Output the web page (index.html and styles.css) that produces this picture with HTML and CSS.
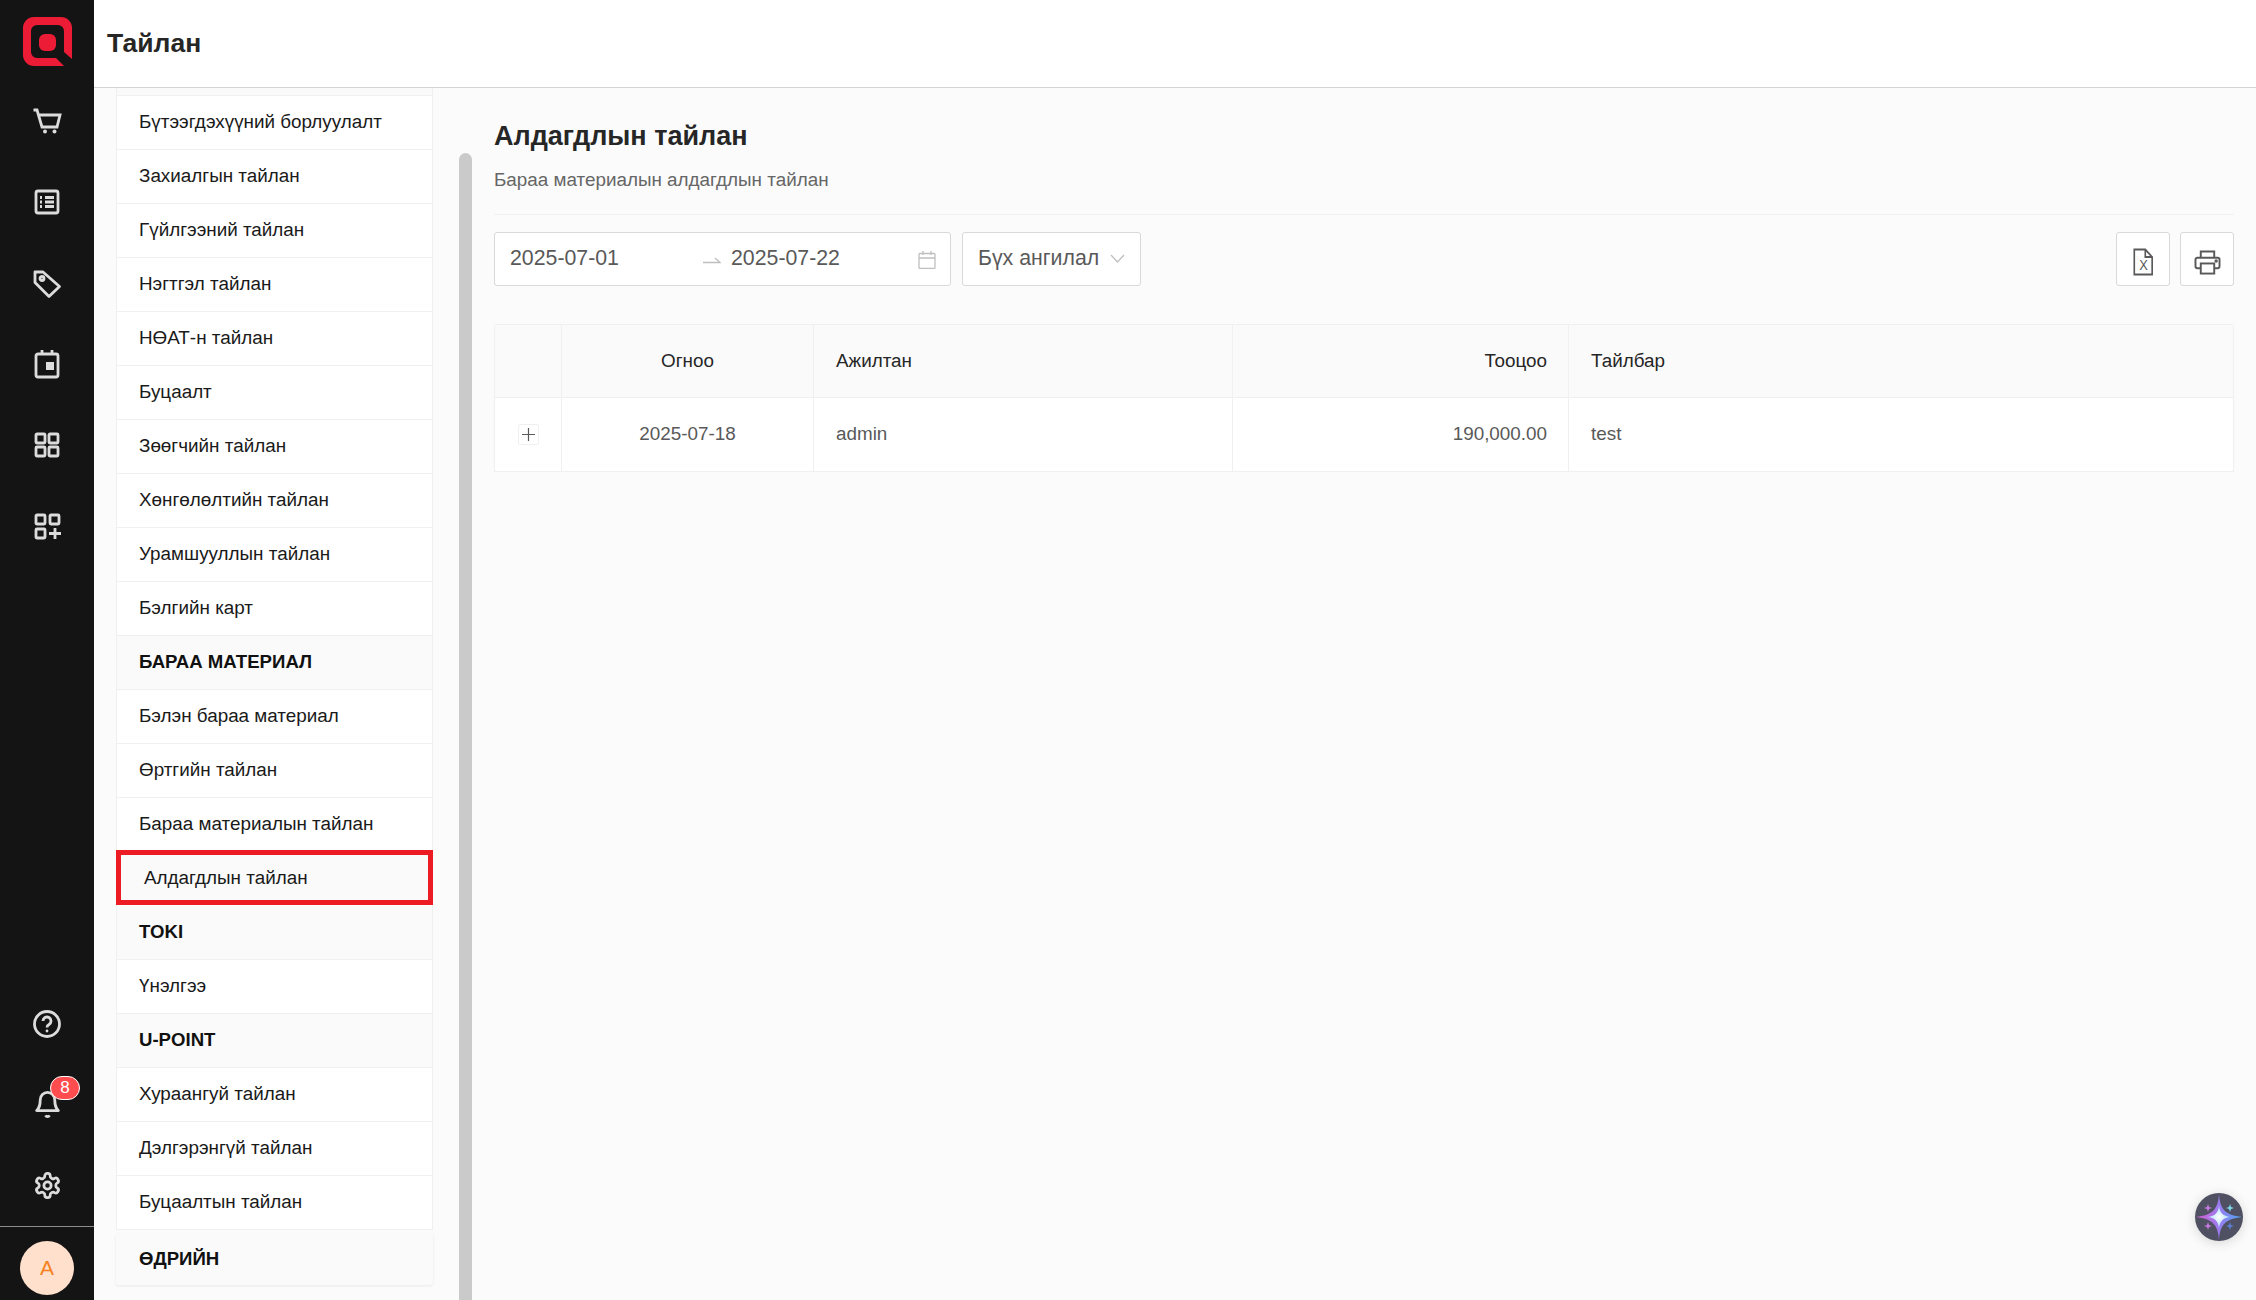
FILE: index.html
```html
<!DOCTYPE html>
<html lang="en">
<head>
  <meta charset="UTF-8">
  <title>Тайлан</title>
  <link rel="stylesheet" href="styles.css">
</head>
<body>
  <div class="app">
    <aside class="rail">
      <div class="logo">
        <svg width="49" height="49" viewBox="0 0 49 49"><path fill="#ed1c36" d="M11 0H38a11 11 0 0 1 11 11V42L41 35V14a6 6 0 0 0-6-6H14a6 6 0 0 0-6 6V35a6 6 0 0 0 6 6H33L41 49H11A11 11 0 0 1 0 38V11A11 11 0 0 1 11 0Z"/><rect fill="#ed1c36" x="16" y="17" width="17" height="17" rx="6"/></svg>
      </div>
      <nav class="rail-nav">
        <a class="rail-item"><svg class="ri" width="28" height="26" viewBox="0 0 28 26"><path d="M.5 2H4L9 19H24L27 7H5.5"/><circle class="dot" cx="12" cy="23.5" r="2"/><circle class="dot" cx="21.5" cy="23.5" r="2"/></svg></a>
        <a class="rail-item"><svg class="ri" width="26" height="26" viewBox="0 0 26 26"><rect x="2" y="2" width="22" height="22" rx="2"/><path d="M11 8.500H20M11 13H20M11 17.500H20M6 8.500H8M6 13H8M6 17.500H8"/></svg></a>
        <a class="rail-item"><svg class="ri" width="30" height="30" viewBox="0 0 30 30"><path d="M3 4H11L27.500 18.500L17 28.500L3 14.500Z" stroke-linejoin="round"/><circle cx="10" cy="10.500" r="2"/></svg></a>
        <a class="rail-item"><svg class="ri" width="26" height="30" viewBox="0 0 26 30"><rect x="2" y="5" width="22" height="23" rx="2"/><path d="M8 1V5M18 1V5"/><rect class="dot" x="12" y="13" width="8" height="8"/></svg></a>
        <a class="rail-item"><svg class="ri" width="26" height="26" viewBox="0 0 26 26"><rect x="2" y="2" width="9" height="9" rx="1"/><rect x="15" y="2" width="9" height="9" rx="1"/><rect x="2" y="15" width="9" height="9" rx="1"/><rect x="15" y="15" width="9" height="9" rx="1"/></svg></a>
        <a class="rail-item rail-plus"><svg class="ri" width="27" height="27" viewBox="0 0 27 27"><rect x="2" y="2" width="9" height="9" rx="1"/><rect x="16" y="2" width="9" height="9" rx="1"/><rect x="2" y="16" width="9" height="9" rx="1"/><path d="M15 20.500H27M21 15V26"/></svg></a>
      </nav>
      <div class="rail-bottom">
        <a class="rail-item"><svg class="ri" width="28" height="28" viewBox="0 0 28 28"><circle cx="14" cy="14" r="12.500"/><path d="M10 11a4 4 0 1 1 6 3.500c-1.500.9-2 1.500-2 3"/><circle class="dot" cx="14" cy="21" r="1.400"/></svg></a>
        <a class="rail-item bell">
          <svg class="ri" width="29" height="29" viewBox="0 0 24 24" stroke-linejoin="round"><path d="M6 8a6 6 0 0 1 12 0c0 7 3 9 3 9H3s3-2 3-9" stroke-width="2.300"/><path d="M10.300 21a1.940 1.940 0 0 0 3.400 0" stroke-width="2.300"/></svg>
          <span class="badge">8</span>
        </a>
        <a class="rail-item"><svg class="ri" width="29" height="29" viewBox="0 0 24 24" stroke-linejoin="round"><path stroke-width="2.300" d="M12.220 2h-.44a2 2 0 0 0-2 2v.18a2 2 0 0 1-1 1.730l-.43.25a2 2 0 0 1-2 0l-.15-.08a2 2 0 0 0-2.730.73l-.22.38a2 2 0 0 0 .73 2.730l.15.1a2 2 0 0 1 1 1.720v.51a2 2 0 0 1-1 1.740l-.15.09a2 2 0 0 0-.73 2.730l.22.38a2 2 0 0 0 2.730.73l.15-.08a2 2 0 0 1 2 0l.43.25a2 2 0 0 1 1 1.730V20a2 2 0 0 0 2 2h.44a2 2 0 0 0 2-2v-.18a2 2 0 0 1 1-1.730l.43-.25a2 2 0 0 1 2 0l.15.08a2 2 0 0 0 2.730-.73l.22-.39a2 2 0 0 0-.73-2.730l-.15-.08a2 2 0 0 1-1-1.740v-.5a2 2 0 0 1 1-1.740l.15-.09a2 2 0 0 0 .73-2.730l-.22-.38a2 2 0 0 0-2.730-.73l-.15.08a2 2 0 0 1-2 0l-.43-.25a2 2 0 0 1-1-1.730V4a2 2 0 0 0-2-2z"/><circle cx="12" cy="12" r="3" stroke-width="2.300"/></svg></a>
        <div class="rail-user"><span class="avatar">A</span></div>
      </div>
    </aside>

    <div class="page">
      <header class="topbar"><h1>Тайлан</h1></header>
      <div class="body">
        <section class="side">
          <div class="menu-wrap">
            <div class="stub"></div>
            <ul class="menu">
              <li>Бүтээгдэхүүний борлуулалт</li>
              <li>Захиалгын тайлан</li>
              <li>Гүйлгээний тайлан</li>
              <li>Нэгтгэл тайлан</li>
              <li>НӨАТ-н тайлан</li>
              <li>Буцаалт</li>
              <li>Зөөгчийн тайлан</li>
              <li>Хөнгөлөлтийн тайлан</li>
              <li>Урамшууллын тайлан</li>
              <li>Бэлгийн карт</li>
              <li class="head">БАРАА МАТЕРИАЛ</li>
              <li>Бэлэн бараа материал</li>
              <li>Өртгийн тайлан</li>
              <li>Бараа материалын тайлан</li>
              <li class="active">Алдагдлын тайлан</li>
              <li class="head">TOKI</li>
              <li>Үнэлгээ</li>
              <li class="head">U-POINT</li>
              <li>Хураангуй тайлан</li>
              <li>Дэлгэрэнгүй тайлан</li>
              <li>Буцаалтын тайлан</li>
            </ul>
            <div class="menu-last">ӨДРИЙН</div>
          </div>
          <div class="scroll"><div class="thumb"></div></div>
        </section>

        <main class="main">
          <h2>Алдагдлын тайлан</h2>
          <p class="sub">Бараа материалын алдагдлын тайлан</p>
          <div class="toolbar">
            <div class="range">
              <span class="date">2025-07-01</span>
              <svg class="arrow" width="18" height="8" viewBox="0 0 18 8"><path d="M0 6.500H17L12 2" fill="none" stroke="#bfbfbf" stroke-width="1.300"/></svg>
              <span class="date">2025-07-22</span>
              <svg class="cal" width="18" height="18" viewBox="0 0 18 18" fill="none" stroke="#bfbfbf" stroke-width="1.300"><rect x="1" y="2.500" width="16" height="15" rx="1"/><path d="M1 7H17M5 0V4M13 0V4"/></svg>
            </div>
            <div class="select">
              <span>Бүх ангилал</span>
              <svg width="15" height="9" viewBox="0 0 15 9" fill="none" stroke="#bfbfbf" stroke-width="1.300"><path d="M1 1L7.500 8L14 1"/></svg>
            </div>
            <div class="tools">
              <button class="tool"><svg width="22" height="28" viewBox="0 0 24 28" preserveAspectRatio="none" fill="none" stroke="#595959" stroke-width="1.800"><path d="M2.500 1.500H14.500L22 9V26.500H2.500Z"/><path d="M14.500 1.500V9H22"/><text x="12.500" y="22.500" text-anchor="middle" class="xl">X</text></svg></button>
              <button class="tool"><svg width="27" height="25" viewBox="0 0 28 26" fill="none" stroke="#595959" stroke-width="2"><path d="M7 8V1.500H21V8"/><path d="M7 19H3.500a2 2 0 0 1-2-2V10a2 2 0 0 1 2-2H24.500a2 2 0 0 1 2 2V17a2 2 0 0 1-2 2H21"/><rect x="7" y="14" width="14" height="10.500"/><circle cx="23" cy="11.500" r=".8" fill="#595959"/></svg></button>
            </div>
          </div>
          <table class="grid">
            <thead>
              <tr><th class="c-exp"></th><th class="c-date">Огноо</th><th class="c-user">Ажилтан</th><th class="c-sum">Тооцоо</th><th>Тайлбар</th></tr>
            </thead>
            <tbody>
              <tr>
                <td class="c-exp"><span class="expand"><svg width="13" height="13" viewBox="0 0 13 13"><path d="M0 6.500H13M6.500 0V13" stroke="#595959" stroke-width="1.200"/></svg></span></td>
                <td class="c-date">2025-07-18</td><td class="c-user">admin</td><td class="c-sum">190,000.00</td><td>test</td>
              </tr>
            </tbody>
          </table>
        </main>
      </div>
    </div>

    <button class="ai">
      <svg width="48" height="48" viewBox="0 0 48 48">
        <defs>
          <linearGradient id="sl" x1="0" x2="1" y1="0" y2="0"><stop offset="0" stop-color="#d65fd0"/><stop offset=".5" stop-color="#9b7bf0"/><stop offset="1" stop-color="#4aa8ee"/></linearGradient>
          <radialGradient id="sc"><stop offset="0" stop-color="#fff"/><stop offset="1" stop-color="#a9dcff"/></radialGradient>
        </defs>
        <path fill="url(#sl)" d="M24 1C25 16 30 22 47 24C30 26 25 32 24 47C23 32 18 26 1 24C18 22 23 16 24 1Z"/>
        <path fill="url(#sc)" d="M24 13C25 20 28 23 35 24C28 25 25 28 24 35C23 28 20 25 13 24C20 23 23 20 24 13Z"/>
        <path fill="#c77be0" d="M13 11L14 14L17 15L14 16L13 19L12 16L9 15L12 14ZM13 29L14 32L17 33L14 34L13 37L12 34L9 33L12 32Z"/>
        <path fill="#7fd8ea" d="M35 11L36 14L39 15L36 16L35 19L34 16L31 15L34 14Z"/>
        <path fill="#5a7fd0" d="M35 29L36 32L39 33L36 34L35 37L34 34L31 33L34 32Z"/>
      </svg>
    </button>
  </div>
</body>
</html>
```
FILE: styles.css
```css
* { margin: 0; padding: 0; box-sizing: border-box; }

html, body { height: 100%; overflow: hidden; }

body {
  font-family: "Liberation Sans", Arial, sans-serif;
  font-size: 18.850px; color: #1f1f1f; background: #fbfbfb;
}

.app { display: flex; height: 1300px; }

/* dark icon rail */
.rail {
  width: 94px; flex: none; background: #141414;
  display: flex; flex-direction: column;
}
.logo { height: 80px; padding: 17px 0 0 23px; }
.logo svg { display: block; }
.rail-item {
  height: 81px; display: flex; align-items: center; justify-content: center;
  position: relative;
}
.rail-plus svg { margin-top: 2px; }
.ri { fill: none; stroke: #dcdcdc; stroke-width: 2.800; overflow: visible; }
.ri .dot { fill: #dcdcdc; stroke: none; }
.rail-bottom { margin-top: auto; }
.rail-user {
  border-top: 1px solid #8c8c8c; height: 74px; padding-top: 14px;
  display: flex; justify-content: center;
}
.avatar {
  width: 54px; height: 54px; border-radius: 50%;
  background: #ffe0cc; color: #f6801e; font-size: 21px;
  display: flex; align-items: center; justify-content: center;
}
.badge {
  position: absolute; left: 50px; top: 12px;
  width: 30px; height: 24px; border-radius: 12px;
  background: #ff4d4f; border: 1.500px solid #fff; color: #fff;
  font-size: 17px; display: flex; align-items: center; justify-content: center;
}

.page { flex: 1; display: flex; flex-direction: column; min-width: 0; }

.topbar {
  height: 88px; flex: none; background: #fff; border-bottom: 1px solid #d4d4d4;
  padding-left: 13px; display: flex; align-items: center;
}
.topbar h1 { font-size: 26.500px; font-weight: 700; color: #262626; }

.body { flex: 1; display: flex; min-height: 0; }

/* report menu */
.side { width: 378px; flex: none; display: flex; padding-left: 22px; overflow: hidden; }
.menu-wrap { width: 317px; flex: none; }
.stub { height: 8px; background: #fafafa; border: 1px solid #f0f0f0; border-width: 0 1px 1px; }
.menu { list-style: none; background: #fff; border: 1px solid #f0f0f0; border-width: 0 1px; }
.menu li {
  height: 54px; padding: 0 0 1px 22px; display: flex; align-items: center;
  border-bottom: 1px solid #f0f0f0; color: #1a1a1a; white-space: nowrap;
}
.menu li.head { background: #fafafa; font-weight: 700; color: #111; font-size: 18.600px; }
.menu li.active {
  background: #fafafa; border: 5px solid #ed1c24; height: 55px;
  margin: -2px -1px 1px; padding: 1px 0 0 23px;
}
.menu-last {
  margin-top: 3px; height: 52px; padding-left: 23px; background: #fafafa;
  border-radius: 3px; display: flex; align-items: center;
  font-weight: 700; font-size: 18.600px; color: #111; box-shadow: 0 1px 3px rgba(0, 0, 0, .08);
}
.scroll { width: 13px; margin-left: 26px; padding-top: 65px; }
.thumb { height: 1200px; background: #cacaca; border-radius: 7px 7px 0 0; }

/* report body */
.main { flex: 1; min-width: 0; padding: 0 22px; }
.main h2 { font-size: 27px; font-weight: 700; color: #262626; line-height: 34px; margin-top: 31px; }
.sub { color: #666; line-height: 24px; margin-top: 15px; padding-bottom: 22px; border-bottom: 1px solid #f0f0f0; }

.toolbar { display: flex; gap: 11px; height: 54px; margin-top: 17px; font-size: 21.300px; color: #595959; }
.range {
  width: 457px; background: #fff; border: 1px solid #d9d9d9; border-radius: 3px;
  display: flex; align-items: center; padding: 0 0 2px 15px; position: relative;
}
.range .date { width: 193px; }
.arrow { width: 18px; margin-top: 4px; flex: none; }
.arrow + .date { margin-left: 10px; }
.cal { position: absolute; right: 14px; top: 18px; }
.select {
  width: 179px; background: #fff; border: 1px solid #d9d9d9; border-radius: 3px;
  display: flex; align-items: center; justify-content: space-between; padding: 0 15px 2px;
}
.tools { margin-left: auto; display: flex; gap: 10px; }
.tool {
  width: 54px; height: 54px; background: #fff; border: 1px solid #d9d9d9; border-radius: 3px;
  display: flex; align-items: center; justify-content: center; padding-top: 6px;
}
.xl { font-family: "Liberation Sans", sans-serif; font-size: 14px; fill: #595959; stroke: none; }

.grid {
  width: 100%; margin-top: 38px; border-collapse: separate; border-spacing: 0;
  table-layout: fixed; background: #fff;
  border: 1px solid #f0f0f0; border-radius: 3px 3px 0 0; border-bottom: 0;
}
.grid th, .grid td {
  height: 74px; padding: 0 22px; border-bottom: 1px solid #f0f0f0;
  text-align: left; font-weight: 400; white-space: nowrap;
}
.grid th { background: #fafafa; color: #262626; height: 73px; }
.grid td { color: #595959; padding-bottom: 2px; }
.grid th + th, .grid td + td { border-left: 1px solid #f0f0f0; }
.c-exp { width: 66px; }
.c-date { width: 252px; text-align: center !important; }
.c-user { width: 419px; }
.c-sum { width: 336px; text-align: right !important; padding-right: 21px !important; }
.grid .c-exp { padding: 0 0 2px; text-align: center; }
.expand {
  display: inline-flex; width: 21px; height: 21px; align-items: center; justify-content: center;
  border: 1px solid #f0f0f0; border-radius: 2px; vertical-align: middle;
}

.ai {
  position: fixed; left: 2195px; top: 1193px; width: 48px; height: 48px;
  border: 0; border-radius: 50%; background: #4f5163; overflow: hidden;
  box-shadow: 0 2px 12px rgba(0, 0, 0, .15);
}
.ai svg { display: block; }
```
